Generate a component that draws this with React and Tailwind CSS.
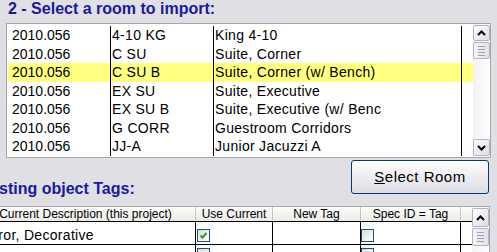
import React from "react";

const rooms = [
    { project: "2010.056", code: "4-10 KG", name: "King 4-10" },
    { project: "2010.056", code: "C SU", name: "Suite, Corner" },
    { project: "2010.056", code: "C SU B", name: "Suite, Corner (w/ Bench)", selected: true },
    { project: "2010.056", code: "EX SU", name: "Suite, Executive" },
    { project: "2010.056", code: "EX SU B", name: "Suite, Executive (w/ Benc" },
    { project: "2010.056", code: "G CORR", name: "Guestroom Corridors" },
    { project: "2010.056", code: "JJ-A", name: "Junior Jacuzzi A" },
];

const tags = [
    { desc: "Mirror, Decorative", useCurrent: true, box: "mt-[7px]" },
    { desc: "Mirror, Full-length", useCurrent: false, box: "mt-[3px]" },
];

const Arrow = ({ up }) => (
    <svg width="9" height="6" viewBox="0 0 9 6">
        <path d={up ? "M1 5 L4.5 1.5 L8 5" : "M1 1 L4.5 4.5 L8 1"} fill="none" stroke="#000" strokeWidth="2" />
    </svg>
);

const ScrollButton = ({ up, className = "" }) => (
    <div className={`shrink-0 flex items-center justify-center rounded-[2px] border border-[#b2b4c4] bg-gradient-to-br from-white to-[#dcdde6] ${className}`}>
        <Arrow up={up} />
    </div>
);

const Thumb = ({ className = "" }) => (
    <div className={`shrink-0 flex flex-col items-center justify-center gap-[2px] rounded-[2px] border border-[#b2b4c4] bg-gradient-to-r from-[#f4f4f8] to-[#e2e3ea] ${className}`}>
        <div className="w-[7px] h-px bg-[#9fa0ad]" />
        <div className="w-[7px] h-px bg-[#9fa0ad]" />
        <div className="w-[7px] h-px bg-[#9fa0ad]" />
        <div className="w-[7px] h-px bg-[#9fa0ad]" />
    </div>
);

const CheckBox = ({ checked, className = "" }) => (
    <div className={`w-[13px] h-[13px] border border-[#1c5180] bg-gradient-to-br from-[#dcdcd7] to-white flex items-center justify-center ${className}`}>
        {checked && (
            <svg width="9" height="9" viewBox="0 0 9 9">
                <path d="M1.5 4.5 L3.5 6.5 L7.5 2" fill="none" stroke="#21a121" strokeWidth="2" />
            </svg>
        )}
    </div>
);

export default function App() {
    return (
        <div className="w-[497px] h-[252px] overflow-hidden bg-[#e0dfe3] font-['Liberation_Sans',Arial,sans-serif] text-black flex flex-col">
            <h1 className="shrink-0 h-[23px] pl-[8px] text-[16px] leading-[18px] font-bold text-[#1a1a9a]">
                2 - Select a room to import:
            </h1>

            {/* room list */}
            <div className="shrink-0 ml-[6px] w-[485px] h-[135px] border border-[#a7a6aa] bg-white flex">
                <div className="flex-1 flex flex-col pl-[1px] pt-[2px]">
                    {rooms.map((r) => (
                        <div
                            key={r.code}
                            className={`shrink-0 flex h-[18.5px] text-[14px] leading-[18.5px] tracking-[0.3px] whitespace-nowrap ${r.selected ? "bg-[#ffff80]" : ""}`}
                        >
                            <div className="w-[103px] pl-[4px] border-r border-black tracking-normal">{r.project}</div>
                            <div className="w-[103px] pl-[1px] border-r border-black">{r.code}</div>
                            <div className="w-[248px] pl-[1px] border-r border-black">{r.name}</div>
                            <div className="flex-1" />
                        </div>
                    ))}
                </div>
                <div className="w-[17px] flex flex-col py-[1px] bg-gradient-to-r from-[#f3f3f6] to-[#fdfdfd]">
                    <ScrollButton up className="h-[16px]" />
                    <Thumb className="mt-[1px] h-[17px]" />
                    <div className="flex-1" />
                    <ScrollButton className="h-[17px]" />
                </div>
            </div>

            <div className="shrink-0 h-[48px] flex justify-between">
                <h2 className="self-end mb-[8px] -ml-[25px] text-[16px] leading-[18px] font-bold text-[#1a1a9a] whitespace-nowrap">
                    Existing object Tags:
                </h2>
                <button className="mt-[2px] mr-[8px] w-[138px] h-[34px] rounded-[3px] border border-[#003c74] bg-gradient-to-b from-white to-[#dcdce4] text-[15px] tracking-[0.5px]">
                    <span className="underline">S</span>elect Room
                </button>
            </div>

            {/* tag grid */}
            <div className="shrink-0 -ml-[24px] w-[514px] h-[60px] flex border-t border-r border-[#a7a6aa] bg-white">
                <div className="flex-1 flex flex-col">
                    <div className="shrink-0 h-[15px] flex border-b border-black bg-gradient-to-b from-[#fdfdfd] to-[#ebeae5] text-[12px] leading-[14px] whitespace-nowrap">
                        <div className="w-[220px] text-center border-r border-[#c5c5c5]">Current Description (this project)</div>
                        <div className="w-[77px] text-center border-r border-[#c5c5c5]">Use Current</div>
                        <div className="w-[88px] text-center border-r border-[#c5c5c5]">New Tag</div>
                        <div className="w-[100px] text-center border-r border-[#c5c5c5]">Spec ID = Tag</div>
                        <div className="flex-1" />
                    </div>
                    {tags.map((t) => (
                        <div key={t.desc} className="shrink-0 h-[23px] flex border-b border-black text-[14px] leading-[16px] tracking-[0.3px] whitespace-nowrap">
                            <div className="w-[220px] pl-[2px] pt-[5px] border-r border-black">{t.desc}</div>
                            <div className="w-[77px] pl-[1px] border-r border-black">
                                <CheckBox checked={t.useCurrent} className={t.box} />
                            </div>
                            <div className="w-[88px] border-r border-black" />
                            <div className="w-[100px] border-r border-black">
                                <CheckBox className={t.box} />
                            </div>
                            <div className="flex-1" />
                        </div>
                    ))}
                </div>
                <div className="w-[17px] flex flex-col pt-[1px] bg-gradient-to-r from-[#f3f3f6] to-[#fdfdfd]">
                    <ScrollButton up className="h-[19px]" />
                    <Thumb className="mt-[1px] h-[18px]" />
                </div>
            </div>
        </div>
    );
}
